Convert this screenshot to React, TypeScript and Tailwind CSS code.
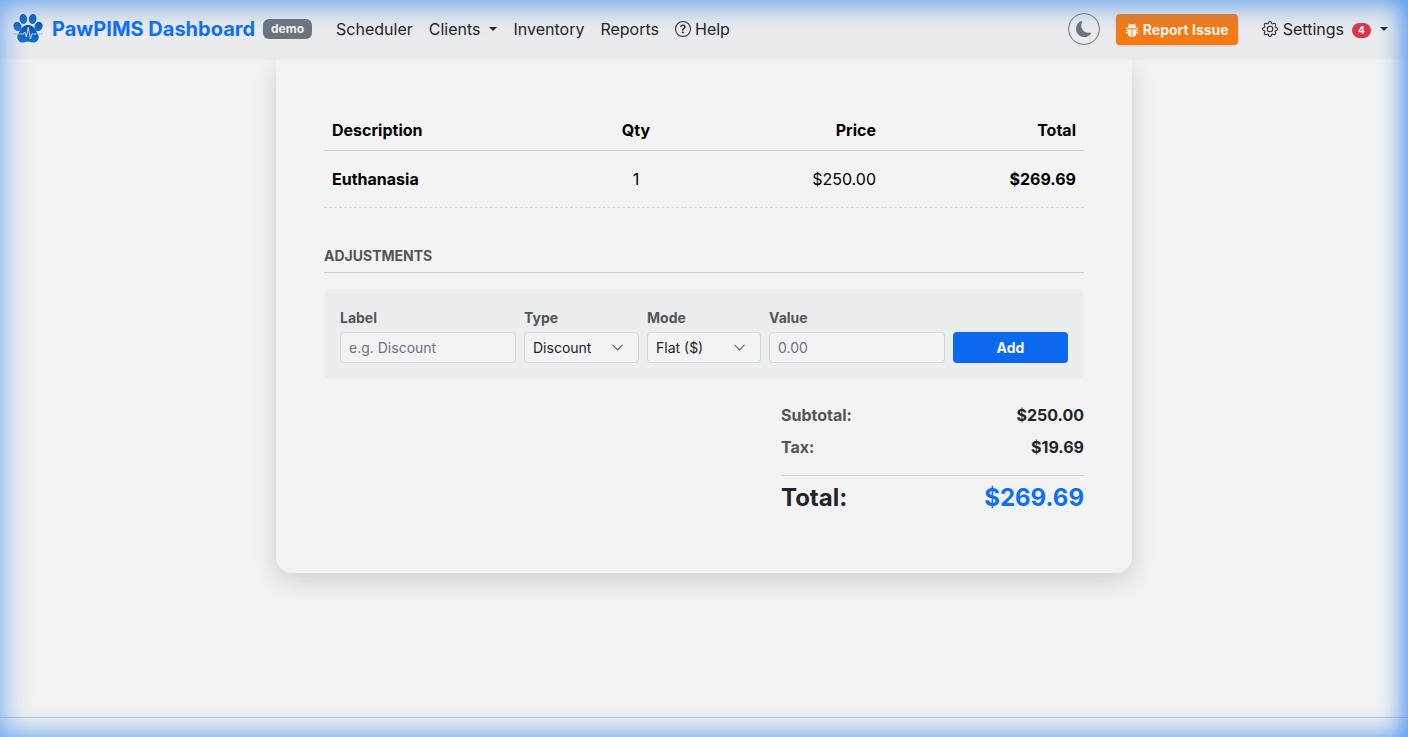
import { BsBugFill, BsGear, BsQuestionCircle, BsMoonFill, BsChevronDown } from "react-icons/bs";

function Paw() {
  return (
    <svg width="32" height="32" viewBox="0 0 32 32" className="shrink-0">
      <defs>
        <linearGradient id="pawg" x1="0" y1="0" x2="0" y2="1">
          <stop offset="0" stopColor="#114f9e" />
          <stop offset="1" stopColor="#1270dc" />
        </linearGradient>
      </defs>
      <g fill="url(#pawg)">
        <ellipse cx="11.300" cy="6" rx="3.800" ry="5" transform="rotate(-8 11.300 6)" />
        <ellipse cx="20.700" cy="6" rx="3.800" ry="5" transform="rotate(8 20.700 6)" />
        <ellipse cx="5.500" cy="13.500" rx="3.900" ry="4.800" transform="rotate(-25 5.500 13.500)" />
        <ellipse cx="26.500" cy="13.500" rx="3.900" ry="4.800" transform="rotate(25 26.500 13.500)" />
        <path d="M16 12c-4 0-6.300 2.700-8 5.800-1.500 2.700-3.200 4.700-2.700 7.300.5 2.600 2.700 4.700 5.400 4.500 1.900-.1 3.500-.8 5.300-.8s3.400.7 5.300.8c2.700.2 4.900-1.900 5.400-4.500.5-2.600-1.200-4.600-2.700-7.300-1.700-3.100-4-5.800-8-5.800z" />
      </g>
      <path d="M1 21h7.500M23.500 21H31" fill="none" stroke="#8fc0dc" strokeWidth="0.9" />
      <path d="M8.500 21h3l1.300-2 1.500 5 2-10 2 12 1.500-5h3.700" fill="none" stroke="#dbe9f6" strokeWidth="0.9" />
    </svg>
  );
}

function Caret() {
  return <span className="inline-block w-0 h-0 border-x-[4.8px] border-x-transparent border-t-[4.8px] border-t-[#212529]" />;
}

function NavLink({ children }: { children: React.ReactNode }) {
  return <a className="flex items-center text-[#212529] whitespace-nowrap">{children}</a>;
}

function SelectBox({ value }: { value: string }) {
  return (
    <div className="h-[31px] flex items-center justify-between pl-2 pr-[14px] pt-[1px] bg-[#f3f3f3] border border-[#d5d8dd] rounded-[4px] text-sm text-[#212529]">
      <span>{value}</span>
      <BsChevronDown className="text-[13px] text-[#343a40]" />
    </div>
  );
}

function Field({ label, children }: { label: string; children: React.ReactNode }) {
  return (
    <div className="flex flex-col gap-[4px]">
      <div className="text-sm leading-[20px] font-bold text-[#555]">{label}</div>
      {children}
    </div>
  );
}

function TextBox({ text }: { text: string }) {
  return (
    <div className="h-[31px] flex items-center px-2 pt-[1px] bg-[#f3f3f3] border border-[#d5d8dd] rounded-[4px] text-sm text-[#6c757d]">
      {text}
    </div>
  );
}

export default function App() {
  return (
    <div className="relative h-[737px] overflow-hidden bg-[#f3f3f3] flex flex-col font-['Inter',sans-serif] text-[#212529]">
      <nav className="relative z-10 shrink-0 h-[58px] flex items-center justify-between bg-[#eaebed] shadow-[0_1px_2px_rgba(0,0,0,0.05)] pl-3 pr-5">
        <div className="flex items-center">
          <Paw />
          <span className="ml-2 text-[20px] font-bold text-[#0d6efd]">PawPIMS Dashboard</span>
          <span className="ml-2 h-[20px] px-2 flex items-center rounded-[6px] bg-[#6c757d] text-[#f3f3f3] text-xs font-bold">demo</span>
          <div className="ml-6 flex items-center gap-4">
            <NavLink>Scheduler</NavLink>
            <NavLink>
              Clients
              <span className="ml-[9px] flex"><Caret /></span>
            </NavLink>
            <NavLink>Inventory</NavLink>
            <NavLink>Reports</NavLink>
            <NavLink>
              <BsQuestionCircle className="mr-1 text-base" />
              Help
            </NavLink>
          </div>
        </div>
        <div className="flex items-center">
          <button className="w-8 h-8 rounded-full border border-[#6c757d] flex items-center justify-center text-[#6c757d]">
            <BsMoonFill className="text-base" />
          </button>
          <button className="ml-4 h-[31px] w-[122px] pt-[2px] rounded-[4px] bg-[#f57a14] text-[#f8f4ee] text-sm font-bold flex items-center justify-center gap-1 shadow-sm">
            <BsBugFill className="text-sm" />
            Report Issue
          </button>
          <div className="ml-6 flex items-center">
            <BsGear className="text-base mr-[5px]" />
            Settings
            <span className="ml-2 mt-[3px] w-[19px] h-[15px] rounded-full bg-[#dc3545] text-white text-[10px] font-bold flex items-center justify-center">4</span>
            <span className="ml-[9px] flex"><Caret /></span>
          </div>
        </div>
      </nav>

      <main className="flex-1 flex flex-col items-center min-h-0">
        <section className="w-[856px] h-[515px] shrink-0 bg-[#f3f3f3] rounded-b-[16px] shadow-[0_8px_24px_rgba(0,0,0,0.15)] px-12 pt-[52px]">
          <table className="w-full table-fixed border-collapse text-black">
            <thead>
              <tr className="h-[40px] border-b border-[#ced2d6]">
                <th className="w-[264px] px-2 text-left font-bold">Description</th>
                <th className="w-[96px] text-center font-bold">Qty</th>
                <th className="w-[200px] px-2 text-right font-bold">Price</th>
                <th className="w-[200px] px-2 text-right font-bold">Total</th>
              </tr>
            </thead>
            <tbody>
              <tr className="h-[57px] border-b border-dashed border-[#d5d8dc]">
                <td className="px-2 font-bold">Euthanasia</td>
                <td className="text-center">1</td>
                <td className="px-2 text-right">$250.00</td>
                <td className="px-2 text-right font-bold">$269.69</td>
              </tr>
            </tbody>
          </table>

          <div className="mt-[37px] pb-[6px] border-b border-[#ced2d6] text-sm leading-[21px] font-bold uppercase text-[#555]">
            Adjustments
          </div>

          <div className="mt-4 h-[90px] p-4 pt-[18px] rounded-[6px] bg-[#ecedef] grid grid-cols-[176px_115px_114px_176px_115px] gap-2 items-end">
            <Field label="Label"><TextBox text="e.g. Discount" /></Field>
            <Field label="Type"><SelectBox value="Discount" /></Field>
            <Field label="Mode"><SelectBox value="Flat ($)" /></Field>
            <Field label="Value"><TextBox text="0.00" /></Field>
            <button className="h-[31px] pt-[1px] rounded-[4px] bg-[#0b69f0] text-[#f5f7fa] text-sm font-bold">Add</button>
          </div>

          <div className="ml-auto mt-5 w-[303px]">
            <div className="flex justify-between h-[32px] items-center">
              <span className="font-bold text-[#555]">Subtotal:</span>
              <span className="font-bold">$250.00</span>
            </div>
            <div className="flex justify-between h-[32px] items-center">
              <span className="font-bold text-[#555]">Tax:</span>
              <span className="font-bold">$19.69</span>
            </div>
            <div className="mt-3 pt-[6px] border-t border-[#ced2d6] flex justify-between items-center text-2xl leading-[32px] font-bold">
              <span>Total:</span>
              <span className="text-[#0d6efd]">$269.69</span>
            </div>
          </div>
        </section>
      </main>

      <footer className="shrink-0 h-[20px] border-t border-[#c6ccd4] bg-[#f0f1f3]" />

      <div className="pointer-events-none absolute inset-0 z-20 shadow-[inset_-14px_0_24px_-8px_rgba(80,150,245,0.85),inset_14px_0_30px_-8px_rgba(110,170,240,0.5),inset_0_14px_26px_-8px_rgba(90,155,240,0.6),inset_0_-12px_24px_-6px_rgba(110,170,240,0.5)]" />
    </div>
  );
}
